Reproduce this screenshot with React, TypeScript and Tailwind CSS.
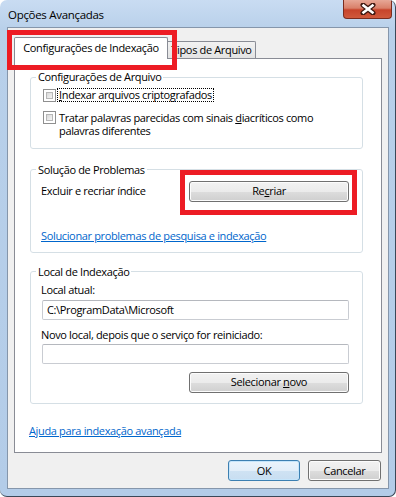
import React from "react";

const Btn = ({ children, w, def }: { children: React.ReactNode; w: string; def?: boolean }) => (
  <div
    className={
      "h-[21px] rounded-[3px] border flex items-center justify-center text-black " +
      w +
      (def
        ? " border-[#3c7fb1] bg-[linear-gradient(#eaf4fc_0%,#e2eef9_50%,#cfe2f3_51%,#c8def1_100%)] shadow-[inset_0_0_0_1px_#c5e5fb]"
        : " border-[#707070] bg-[linear-gradient(#f2f2f2_0%,#ebebeb_50%,#dddddd_51%,#cfcfcf_100%)] shadow-[inset_0_0_0_1px_#fcfcfc]")
    }
  >
    {children}
  </div>
);

const Check = () => (
  <div className="w-[13px] h-[13px] shrink-0 border border-[#8f8f8f] bg-white p-[2px]">
    <div className="w-full h-full border border-[#b7b7b7] bg-[linear-gradient(135deg,#d9d9d9,#f5f5f5)]" />
  </div>
);

const Input = ({ value }: { value?: string }) => (
  <div className="h-[20px] w-[307px] ml-[11px] rounded-[2px] border border-[#c9ccd2] border-t-[#b5b8be] bg-white flex items-center pl-[4px] text-black">
    {value}
  </div>
);

export default function App() {
  return (
    <div className="w-[396px] h-[497px] relative overflow-hidden rounded-t-[7px] rounded-b-[7px] border-r border-b border-[#3a4858] bg-[linear-gradient(#c9dcf2,#b8d0ea_30px,#b3cce8)] font-['Segoe_UI','Open_Sans',sans-serif] text-[11px] tracking-[-0.35px] leading-[16px] text-black">
      {/* title bar */}
      <div className="h-[27px] pl-[8px] pt-[7px] text-[11.5px] tracking-[-0.3px] leading-[16px] text-black">Opções Avançadas</div>
      {/* close button */}
      <div className="absolute top-0 left-[343px] w-[49px] h-[19px] rounded-b-[4px] border border-t-0 border-[#7a2c1f] bg-[linear-gradient(#e7a796,#d9806a_45%,#c7442b_55%,#d0593c)] flex items-center justify-center">
        <svg width="16" height="12" viewBox="0 0 16 12">
          <path d="M3 2 L13 10 M13 2 L3 10" stroke="#3d1710" strokeWidth="5" strokeLinecap="round" />
          <path d="M3.5 2.5 L12.5 9.5 M12.5 2.5 L3.5 9.5" stroke="#ffffff" strokeWidth="2.6" strokeLinecap="square" />
        </svg>
      </div>

      {/* client area */}
      <div className="ml-[7px] w-[382px] h-[462px] bg-[#f0f0f0] border border-[#8596ab] flex flex-col">
        {/* tabs */}
        <div className="h-[30px] flex items-end pl-[6px] relative z-10">
          <div className="w-[154px] h-[22px] -mb-px bg-white border border-b-0 border-[#898c95] rounded-t-[2px] flex items-center justify-center pb-[2px] whitespace-nowrap">
            Configurações de Indexação
          </div>
          <div className="w-[88px] h-[17px] bg-[linear-gradient(#f2f2f2,#e3e3e3)] border border-l-0 border-b-0 border-[#898c95] rounded-tr-[2px] flex items-center justify-center whitespace-nowrap">
            Tipos de Arquivo
          </div>
        </div>
        {/* panel */}
        <div className="ml-[6px] w-[368px] h-[395px] bg-white border border-[#898c95] flex flex-col">
          {/* group 1 */}
          <fieldset className="mt-[10px] ml-[15px] w-[333px] border border-[#d5dfe5] rounded-[3px] pb-[11px]">
            <legend className="ml-[5px] px-[2px]">Configurações de Arquivo</legend>
            <div className="mt-[3px] ml-[12px] h-[14px] flex items-center">
              <Check />
              <span className="ml-[1px] px-[1px] border border-dotted border-black leading-[12px]">
                <u>I</u>ndexar arquivos criptografados
              </span>
            </div>
            <div className="mt-[9px] ml-[12px] flex items-start">
              <Check />
              <span className="ml-[2px] px-[1px] leading-[13px] -mt-[0.5px]">
                Tratar palavras parecidas com sinais <u>d</u>iacríticos como
                <br />
                palavras diferentes
              </span>
            </div>
          </fieldset>
          {/* group 2 */}
          <fieldset className="mt-[13px] ml-[15px] w-[333px] border border-[#d5dfe5] rounded-[3px] pb-[8px]">
            <legend className="ml-[5px] px-[2px]">Solução de Problemas</legend>
            <div className="mt-[3px] pl-[10px] pr-[13px] h-[21px] flex items-center justify-between">
              <span>Excluir e recriar índice</span>
              <Btn w="w-[160px]">
                <span>
                  Re<u>c</u>riar
                </span>
              </Btn>
            </div>
            <div className="mt-[26px] pl-[10px] text-[#0066cc] underline">Solucionar problemas de pesquisa e indexação</div>
          </fieldset>
          {/* group 3 */}
          <fieldset className="mt-[11px] ml-[15px] w-[333px] border border-[#d5dfe5] rounded-[3px] pb-[10px]">
            <legend className="ml-[5px] px-[2px]">Local de Indexação</legend>
            <div className="mt-[2px] pl-[10px]">Local atual:</div>
            <div className="mt-[2px]">
              <Input value="C:\ProgramData\Microsoft" />
            </div>
            <div className="mt-[7px] pl-[10px]">Novo local, depois que o serviço for reiniciado:</div>
            <div className="mt-[1px]">
              <Input />
            </div>
            <div className="mt-[8px] flex justify-end pr-[13px]">
              <Btn w="w-[160px]">
                <span>
                  Selecionar <u>n</u>ovo
                </span>
              </Btn>
            </div>
          </fieldset>
          <div className="mt-[19px] ml-[14px] text-[#0066cc] underline">Ajuda para indexação avançada</div>
        </div>
        {/* bottom buttons */}
        <div className="mt-[7px] flex justify-end gap-[8px] pr-[7px]">
          <Btn w="w-[72px]" def>
            OK
          </Btn>
          <Btn w="w-[73px]">Cancelar</Btn>
        </div>
      </div>

      {/* red highlight overlays */}
      <div className="absolute left-[7px] top-[30px] w-[170px] h-[40px] border-[5px] border-[#ed1c24] z-20 pointer-events-none" />
      <div className="absolute left-[180px] top-[170px] w-[177px] h-[45px] border-[5px] border-[#ed1c24] z-20 pointer-events-none" />
    </div>
  );
}
